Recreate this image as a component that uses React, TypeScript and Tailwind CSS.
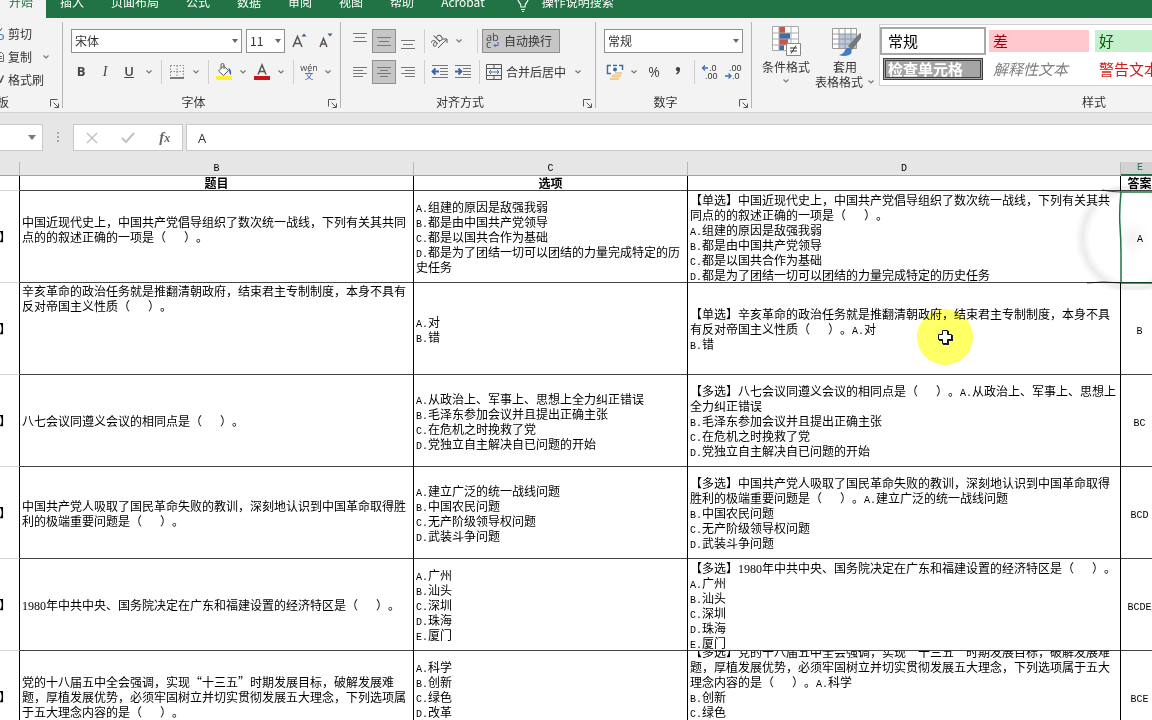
import { useState } from "react";
import type { ReactNode } from "react";

type Row = {
    kind: string;
    question: string;
    options: string;
    full: string;
    answer: string;
    top?: boolean;
};

const tabs = ["插入", "页面布局", "公式", "数据", "审阅", "视图", "帮助", "Acrobat"];

const rows: Row[] = [
    {
        kind: "【单选】",
        question: "中国近现代史上，中国共产党倡导组织了数次统一战线，下列有关其共同\n点的的叙述正确的一项是（   ）。\n",
        options: "A.组建的原因是敌强我弱\nB.都是由中国共产党领导\nC.都是以国共合作为基础\nD.都是为了团结一切可以团结的力量完成特定的历\n史任务",
        full: "【单选】中国近现代史上，中国共产党倡导组织了数次统一战线，下列有关其共\n同点的的叙述正确的一项是（   ）。\nA.组建的原因是敌强我弱\nB.都是由中国共产党领导\nC.都是以国共合作为基础\nD.都是为了团结一切可以团结的力量完成特定的历史任务",
        answer: "A",
    },
    {
        kind: "【单选】",
        question: "辛亥革命的政治任务就是推翻清朝政府，结束君主专制制度，本身不具有\n反对帝国主义性质（   ）。",
        options: "A.对\nB.错",
        full: "【单选】辛亥革命的政治任务就是推翻清朝政府，结束君主专制制度，本身不具\n有反对帝国主义性质（   ）。A.对\nB.错",
        answer: "B",
        top: true,
    },
    {
        kind: "【多选】",
        question: "八七会议同遵义会议的相同点是（   ）。",
        options: "A.从政治上、军事上、思想上全力纠正错误\nB.毛泽东参加会议并且提出正确主张\nC.在危机之时挽救了党\nD.党独立自主解决自已问题的开始",
        full: "【多选】八七会议同遵义会议的相同点是（   ）。A.从政治上、军事上、思想上\n全力纠正错误\nB.毛泽东参加会议并且提出正确主张\nC.在危机之时挽救了党\nD.党独立自主解决自已问题的开始",
        answer: "BC",
    },
    {
        kind: "【多选】",
        question: "中国共产党人吸取了国民革命失败的教训，深刻地认识到中国革命取得胜\n利的极端重要问题是（   ）。",
        options: "A.建立广泛的统一战线问题\nB.中国农民问题\nC.无产阶级领导权问题\nD.武装斗争问题",
        full: "【多选】中国共产党人吸取了国民革命失败的教训，深刻地认识到中国革命取得\n胜利的极端重要问题是（   ）。A.建立广泛的统一战线问题\nB.中国农民问题\nC.无产阶级领导权问题\nD.武装斗争问题",
        answer: "BCD",
    },
    {
        kind: "【多选】",
        question: "1980年中共中央、国务院决定在广东和福建设置的经济特区是（   ）。",
        options: "A.广州\nB.汕头\nC.深圳\nD.珠海\nE.厦门",
        full: "【多选】1980年中共中央、国务院决定在广东和福建设置的经济特区是（   ）。\nA.广州\nB.汕头\nC.深圳\nD.珠海\nE.厦门",
        answer: "BCDE",
    },
    {
        kind: "【多选】",
        question: "党的十八届五中全会强调，实现“十三五”时期发展目标，破解发展难\n题，厚植发展优势，必须牢固树立并切实贯彻发展五大理念，下列选项属\n于五大理念内容的是（   ）。",
        options: "A.科学\nB.创新\nC.绿色\nD.改革\nE.开放",
        full: "【多选】党的十八届五中全会强调，实现“十三五”时期发展目标，破解发展难\n题，厚植发展优势，必须牢固树立并切实贯彻发展五大理念，下列选项属于五大\n理念内容的是（   ）。A.科学\nB.创新\nC.绿色\nD.改革\nE.开放",
        answer: "BCE",
    },
];

// Latin runs are set half as wide as a Chinese character
function CellText({ text }: { text: string }) {
    return (
        <div className="shrink-0 text-xs whitespace-pre [text-spacing-trim:space-all]">
            {text.split("\n").map((line, n) => (
                <div key={n} className="h-[15px] leading-[15px]">
                    {line.split(/([A-Z. ]+|[0-9]+)/).map((part, i) => {
                        if (i % 2 === 0) return part;
                        return /[0-9]/.test(part) ? (
                            <span key={i} className="font-['Liberation_Serif',serif]">{part}</span>
                        ) : (
                            <span key={i} className="font-['Liberation_Mono',monospace] text-[10px] leading-none">{part}</span>
                        );
                    })}
                </div>
            ))}
        </div>
    );
}

function Chevron() {
    return (
        <svg className="h-2 w-4 shrink-0" viewBox="0 0 16 8" fill="none" stroke="#777" strokeWidth="1.2">
            <path d="M5.5 2.5 8 5l2.5-2.5" />
        </svg>
    );
}

function ToolButton({ label, wide, active, children }: { label: string; wide?: boolean; active?: boolean; children: ReactNode }) {
    return (
        <button
            aria-label={label}
            className={`flex h-6 shrink-0 items-center justify-center text-[#444] ${wide ? "w-6" : "w-[22px]"} ${active ? "border border-[#8f8f8f] bg-[#c6c6c6]" : ""}`}
        >
            {children}
        </button>
    );
}

function Sep() {
    return <div className="mx-1 h-6 w-px shrink-0 bg-[#d0d0d0]" />;
}

function Lines({ rows }: { rows: number[][] }) {
    return (
        <svg className="h-4 w-4 shrink-0" viewBox="0 0 16 16" stroke="#777" strokeWidth="1">
            {rows.map(([x1, x2, y]) => (
                <path key={y} d={`M${x1} ${y + 0.5}H${x2}`} />
            ))}
        </svg>
    );
}

function Launcher({ label }: { label: string }) {
    return (
        <button aria-label={label + "设置"} className="absolute right-[3px] bottom-0">
            <svg className="h-[9px] w-[9px]" viewBox="0 0 9 9" fill="none" stroke="#555">
                <path d="M.5 7.5v-7h7M3.5 3.5l4.5 4.5M8.5 4.5v4h-4" />
            </svg>
        </button>
    );
}

function Group({ label, className, children }: { label: string; className: string; children: ReactNode }) {
    return (
        <section className={`relative my-1 flex shrink-0 flex-col border-r border-[#b5b5b5] ${className}`}>
            <div className="flex h-[72px] shrink-0 flex-col gap-[7px] pt-[7px]">{children}</div>
            <div className="shrink-0 pr-4 text-center leading-4">{label}</div>
            <Launcher label={label} />
        </section>
    );
}

function Picker({ label, options, className }: { label: string; options: string[]; className: string }) {
    return (
        <div className={`relative ${className}`}>
            <select aria-label={label} className="h-6 w-full appearance-none border border-[#8f8f8f] bg-white pl-[3px] text-xs text-[#333]">
                {options.map((o) => (
                    <option key={o}>{o}</option>
                ))}
            </select>
            <svg className="pointer-events-none absolute top-[10px] right-1 h-1 w-[6px]" viewBox="0 0 6 4" fill="#666">
                <path d="M0 0h6L3 4z" />
            </svg>
        </div>
    );
}

function DecimalIcon({ grow }: { grow?: boolean }) {
    return (
        <svg className="h-[18px] w-[18px]" viewBox="0 0 18 18" fontFamily="Liberation Sans, sans-serif" fontSize="9" fill="#333">
            <text x={grow ? 8 : 5} y="8">{grow ? ".0" : ".00"}</text>
            <text x={grow ? 4 : 8} y="16">{grow ? ".00" : ".0"}</text>
            {grow ? (
                <path d="M1.5 5H7M4 2.5 1.5 5 4 7.5" fill="none" stroke="#3a6fb5" strokeWidth="1.3" />
            ) : (
                <path d="M1 13h6M4.500 10.500 7 13l-2.500 2.500" fill="none" stroke="#3a6fb5" strokeWidth="1.3" />
            )}
        </svg>
    );
}

function IndentIcon({ right }: { right?: boolean }) {
    return (
        <svg className="h-4 w-[18px]" viewBox="0 0 18 16" fill="none" stroke="#777">
            <path d="M1 1.5h16M9 4.5h8M9 7.5h8M9 10.5h8M1 13.5h16" />
            <path d={right ? "M1 7.5h6M4.5 4.5l3 3-3 3" : "M8 7.5H2M4.5 4.5l-3 3 3 3"} stroke="#3a62a5" strokeWidth="1.8" />
        </svg>
    );
}

function Ribbon() {
    return (
        <div className="flex h-[95px] overflow-hidden border-b border-[#d2d2d2] bg-[#f3f3f3] text-xs text-[#333]">
            <section className="relative my-1 flex w-[63px] shrink-0 flex-col border-r border-[#b5b5b5]">
                <div className="flex h-[72px] shrink-0 flex-col">
                    <button className="flex h-[23px] items-center">
                        <svg className="mr-1 h-4 w-1" viewBox="0 0 4 16" fill="none">
                            <path d="M0 5 2 2" stroke="#555" />
                            <circle cx="1" cy="11" r="2.5" stroke="#4a7fc0" strokeWidth="1.2" />
                        </svg>
                        剪切
                    </button>
                    <button className="flex h-[23px] items-center">
                        <svg className="mr-1 h-4 w-1" viewBox="0 0 4 16" fill="none" stroke="#666">
                            <path d="M0 3.5h1.5l2 2v7H0M0 7.5h2M0 9.5h2" />
                        </svg>
                        复制
                        <span className="flex pl-1.5"><Chevron /></span>
                    </button>
                    <button className="flex h-[23px] items-center">
                        <svg className="mr-1 h-4 w-1" viewBox="0 0 4 16">
                            <path d="M0 9 3 3l1 1-3 7H0z" fill="#555" />
                        </svg>
                        格式刷
                    </button>
                </div>
                <div className="flex w-[9px] shrink-0 justify-end">
                    <span className="shrink-0 leading-4 whitespace-nowrap">剪贴板</span>
                </div>
                <Launcher label="剪贴板" />
            </section>

            {/* Font */}
            <Group label="字体" className="w-[278px]">
                <div className="flex items-center gap-1 pl-2">
                    <Picker label="字体" options={["宋体", "黑体"]} className="w-[171px]" />
                    <Picker label="字号" options={["11", "12"]} className="w-[39px]" />
                    <ToolButton label="增大字号" wide>
                        <svg className="h-[18px] w-[18px]" viewBox="0 0 18 18">
                            <path d="M1 15 5.500 4.500 10 15M2.500 11.500h6" fill="none" stroke="#555" strokeWidth="1.5" />
                            <path d="m9.500 4.500 2.500-3 2.500 3z" fill="#3b5f8a" />
                        </svg>
                    </ToolButton>
                    <ToolButton label="减小字号">
                        <svg className="h-[18px] w-[18px]" viewBox="0 0 18 18">
                            <path d="M1 15 4.500 6.500 8 15M2 12h5" fill="none" stroke="#555" strokeWidth="1.5" />
                            <path d="m8.500 1.500 2.500 3 2.500-3z" fill="#3b5f8a" />
                        </svg>
                    </ToolButton>
                </div>
                <div className="flex items-center pl-1.5">
                    <ToolButton label="加粗" wide><b className="font-['Open_Sans',sans-serif] text-[13px]">B</b></ToolButton>
                    <ToolButton label="倾斜" wide><i className="font-['Liberation_Serif',serif] text-sm">I</i></ToolButton>
                    <ToolButton label="下划线" wide><span className="font-['Open_Sans',sans-serif] text-[13px] font-semibold underline">U</span></ToolButton>
                    <Chevron />
                    <Sep />
                    <ToolButton label="边框">
                        <svg className="h-[14px] w-[14px]" viewBox="0 0 14 14" fill="none" stroke="#888">
                            <path d="M.5.5h13v12M.5.5v12M7 .5v12M.5 6.5h13" strokeDasharray="1.5 1.5" />
                            <path d="M0 13h14" stroke="#555" strokeWidth="1.5" />
                        </svg>
                    </ToolButton>
                    <Chevron />
                    <Sep />
                    <ToolButton label="填充颜色">
                        <svg className="h-[18px] w-[18px]" viewBox="0 0 18 18">
                            <path d="M1 13h16v4H1z" fill="#ffee33" />
                            <path d="m3.500 8 5-5 5 4.500-5 5z" fill="#fff" stroke="#555" />
                            <path d="M6 5.500V2q0-1.500 1.500-1.500T9 2v4" fill="none" stroke="#555" />
                            <path d="M13 5q4 1 3 7-2-1-2-5z" fill="#3d67a5" />
                        </svg>
                    </ToolButton>
                    <Chevron />
                    <ToolButton label="字体颜色">
                        <svg className="h-[18px] w-[18px]" viewBox="0 0 18 18">
                            <path d="M1 13h16v4H1z" fill="#c8141c" />
                            <path d="M5 11.500 9 2l4 9.500M6.500 8.500h5" fill="none" stroke="#555" strokeWidth="1.5" />
                        </svg>
                    </ToolButton>
                    <Chevron />
                    <Sep />
                    <ToolButton label="拼音">
                        <span className="flex flex-col items-center text-[9px] leading-[8px]">
                            <span className="font-['Open_Sans',sans-serif]">wén</span>
                            <span className="text-[#2f62ad]">文</span>
                        </span>
                    </ToolButton>
                    <Chevron />
                </div>
            </Group>

            {/* Alignment */}
            <Group label="对齐方式" className="w-[255px]">
                <div className="flex items-center pl-[7px]">
                    <ToolButton label="顶端对齐" wide><Lines rows={[[1, 15, 0], [3, 13, 4], [1, 15, 8]]} /></ToolButton>
                    <ToolButton label="垂直居中" wide active><Lines rows={[[1, 15, 4], [3, 13, 8], [1, 15, 12]]} /></ToolButton>
                    <ToolButton label="底端对齐" wide><Lines rows={[[1, 15, 7], [3, 13, 11], [1, 15, 15]]} /></ToolButton>
                    <Sep />
                    <ToolButton label="方向">
                        <svg className="h-[18px] w-[18px]" viewBox="0 0 18 18" fill="#555">
                            <text x="0" y="12" fontSize="12" fontFamily="Open Sans, sans-serif" transform="rotate(-45 6 10)">ab</text>
                            <path d="m7 16 8.500-8.500M11.500 7h4.500v4" fill="none" stroke="#555" />
                        </svg>
                    </ToolButton>
                    <Chevron />
                    <div className="pl-[6px]"><Sep /></div>
                    <button className="flex h-6 w-[78px] items-center gap-1 border border-[#8f8f8f] bg-[#c6c6c6] pl-[3px] whitespace-nowrap">
                        <svg className="h-4 w-[14px]" viewBox="0 0 14 16" fill="#444" fontFamily="Open Sans, sans-serif" fontSize="11">
                            <text x="0" y="8">ab</text>
                            <text x="0" y="15">c</text>
                            <path d="M12 9v3.500H8M9.500 11 8 12.500 9.500 14" fill="none" stroke="#3a6fb5" />
                        </svg>
                        自动换行
                    </button>
                </div>
                <div className="flex items-center pl-[7px]">
                    <ToolButton label="左对齐" wide><Lines rows={[[1, 15, 3], [1, 11, 6], [1, 15, 9], [1, 11, 12]]} /></ToolButton>
                    <ToolButton label="居中" wide active><Lines rows={[[1, 15, 3], [4, 12, 6], [1, 15, 9], [4, 12, 12]]} /></ToolButton>
                    <ToolButton label="右对齐" wide><Lines rows={[[1, 15, 3], [5, 15, 6], [1, 15, 9], [5, 15, 12]]} /></ToolButton>
                    <Sep />
                    <ToolButton label="减少缩进量"><IndentIcon /></ToolButton>
                    <ToolButton label="增加缩进量" wide><IndentIcon right /></ToolButton>
                    <Sep />
                    <button className="flex h-6 items-center gap-1 pl-0.5 whitespace-nowrap">
                        <svg className="h-4 w-4" viewBox="0 0 16 16" fill="none" stroke="#555">
                            <path d="M.5.5h15v15H.5zM.5 4.500h15M.5 11.500h15M8 .5v4M8 11.500v4" />
                            <path d="M3 8h10M5 6 3 8l2 2M11 6l2 2-2 2" stroke="#3a6fb5" />
                        </svg>
                        合并后居中
                        <Chevron />
                    </button>
                </div>
            </Group>

            {/* Number */}
            <Group label="数字" className="w-[156px]">
                <div className="flex items-center px-2">
                    <Picker label="数字格式" options={["常规", "数值"]} className="w-full" />
                </div>
                <div className="flex items-center pl-2">
                    <ToolButton label="会计数字格式">
                        <svg className="h-[18px] w-[18px]" viewBox="0 0 18 18" fill="none">
                            <path d="M1.500 2.500h15v8h-15z" fill="#fff" />
                            <path d="M5 2.500H1.500v8H5M13 2.500h3.500V7M7 2.500h4" stroke="#3d6d9e" strokeWidth="1.5" />
                            <circle cx="9" cy="6.500" r="2" fill="#3d6d9e" />
                            <path d="M9 9h7v2H9zM6 11.500h9V14H6zM4 14.500h9V17H4z" fill="#f0cf94" />
                        </svg>
                    </ToolButton>
                    <Chevron />
                    <ToolButton label="百分比样式" wide><span className="font-['Open_Sans',sans-serif] text-sm">%</span></ToolButton>
                    <ToolButton label="千位分隔样式" wide>
                        <svg className="h-3 w-2" viewBox="0 0 8 12" fill="#444">
                            <path d="M4 1a2 2 0 0 1 2 2.500Q6 7 2.500 8.500L2 7.500Q3.500 6.500 3.800 5.200A2 2 0 0 1 4 1z" />
                        </svg>
                    </ToolButton>
                    <Sep />
                    <ToolButton label="增加小数位数"><DecimalIcon grow /></ToolButton>
                    <ToolButton label="减少小数位数" wide><DecimalIcon /></ToolButton>
                </div>
            </Group>

            {/* Styles */}
            <section className="my-1 flex flex-1 flex-col overflow-hidden">
                <div className="flex h-[72px] shrink-0">
                    <button className="ml-[9px] flex w-[50px] shrink-0 flex-col items-center pt-1 leading-[15px] whitespace-nowrap">
                        <svg className="mb-0.5 h-[31px] w-[30px] shrink-0" viewBox="0 0 30 31" fill="none">
                            <path d="M1.500.5h26v24h-26z" fill="#fff" />
                            <path d="M8 1h6v6H8zM8 13h9v6H8z" fill="#c9554b" />
                            <path d="M8 7h11v6H8zM8 19h5v6H8z" fill="#3f6da8" />
                            <path d="M1.500.5h26v24h-26zM1.500 7h26M1.500 13h26M1.500 19h26M8 .5v24M20 .5v24" stroke="#aaa" />
                            <path d="M15.500 17.500h14v12h-14z" fill="#fff" stroke="#888" />
                            <path d="M19 22h7M19 25h7M25 19.500l-5 8" stroke="#333" />
                        </svg>
                        条件格式
                        <span className="flex pt-[3px]"><Chevron /></span>
                    </button>
                    <button className="ml-[3px] flex w-[62px] shrink-0 flex-col items-start pt-1 pl-px leading-[15px] whitespace-nowrap">
                        <svg className="mb-0.5 ml-4 h-[31px] w-[30px] shrink-0" viewBox="0 0 30 31" fill="none">
                            <path d="M1.500 2.500h24v20h-24z" fill="#fff" />
                            <path d="M8 8h17.500v14.500H8z" fill="#b9c9e4" />
                            <path d="M1.500 2.500h24v20h-24zM1.500 8h24M1.500 13h24M1.500 18h24M8 2.500v20M14 2.500v20M20 2.500v20" stroke="#999" />
                            <path d="m17 20 11-12 2-1v5L21 24z" fill="#777" />
                            <path d="M8 29q5-1 6-5 3-4 6-1 2 4-2 6-5 2-10 0z" fill="#3f7fc1" />
                        </svg>
                        <span className="pl-[18px]">套用</span>
                        <span className="flex items-center">表格格式<Chevron /></span>
                    </button>
                    <div className="mt-0.5 ml-[3px] h-[62px] flex-1 overflow-hidden border border-r-0 border-[#d0d0d0] bg-white text-[15px]">
                        <div className="flex w-max items-center gap-[3px] pt-0.5">
                            <button className="h-7 w-[106px] border-2 border-[#a8a8a8] bg-white pl-[6px] text-left leading-[22px] text-black">常规</button>
                            <button className="h-[22px] w-[100px] bg-[#ffc7ce] pl-1 text-left leading-5 text-[#9c0006]">差</button>
                            <button className="ml-[3px] h-[22px] w-[100px] bg-[#c6efce] pl-1 text-left leading-5 text-[#006100]">好</button>
                        </div>
                        <div className="flex w-max items-center gap-[6px] pt-[3px] pl-[3px]">
                            <button className="flex h-[22px] w-[100px] items-center border-[3px] border-double border-[#3f3f3f] bg-[#a5a5a5] pl-[2px] leading-4 font-bold text-white">检查单元格</button>
                            <button className="h-[22px] w-[100px] pl-1 text-left leading-5 text-[#7f7f7f] italic">解释性文本</button>
                            <button className="h-[22px] w-[100px] pl-1 text-left leading-5 text-[#d01c1c]">警告文本</button>
                        </div>
                    </div>
                </div>
                <div className="shrink-0 pl-[330px] leading-4 whitespace-nowrap">样式</div>
            </section>
        </div>
    );
}

function FormulaBar() {
    return (
        <div className="flex gap-[3px] bg-[#e6e6e6] py-[11px]">
            <div className="relative w-[43px] shrink-0">
                <input aria-label="名称框" className="h-[27px] w-full border border-l-0 border-[#c8c8c8] bg-white pr-5 text-xs" />
                <svg className="pointer-events-none absolute top-[11px] right-[7px] h-[5px] w-2" viewBox="0 0 8 5" fill="#777">
                    <path d="M0 0h8L4 5z" />
                </svg>
            </div>
            <svg className="h-[27px] w-6 shrink-0" viewBox="0 0 24 27" fill="#a5a5a5">
                <path d="M11 8h2v2h-2zM11 12h2v2h-2zM11 16h2v2h-2z" />
            </svg>
            <div className="flex h-[27px] w-[110px] shrink-0 items-center justify-around border border-[#c8c8c8] bg-white">
                <button aria-label="取消">
                    <svg className="h-3 w-3" viewBox="0 0 12 12" stroke="#c2c2c2" strokeWidth="1.5">
                        <path d="m1 1 10 10M11 1 1 11" />
                    </svg>
                </button>
                <button aria-label="输入">
                    <svg className="h-3 w-[14px]" viewBox="0 0 14 12" fill="none" stroke="#c2c2c2" strokeWidth="2">
                        <path d="m1 6 4 4 8-9" />
                    </svg>
                </button>
                <button aria-label="插入函数" className="font-['Liberation_Serif',serif] text-[15px] leading-4 font-bold text-[#666] italic">
                    f<span className="text-xs">x</span>
                </button>
            </div>
            <input aria-label="编辑栏" defaultValue="A" className="h-[27px] min-w-0 flex-1 border border-r-0 border-[#c8c8c8] bg-white pl-[11px] font-['Open_Sans',sans-serif] text-[13px] text-[#333]" />
        </div>
    );
}

function Sheet() {
    const head = "h-[14px] border-r border-b border-r-[#b8b8b8] border-b-[#a5a5a5] p-0 font-['Liberation_Mono',monospace] text-[10px] leading-[13px] font-normal";
    const title = "h-[15px] border-r border-b border-r-black border-b-[#444] p-0 text-xs leading-[14px] font-bold";
    const cell = "border-r border-b border-r-black border-b-[#444] p-0";
    const box = "flex h-[91px] overflow-hidden pl-[2px]";

    return (
        <main className="relative min-h-0 flex-1 overflow-hidden bg-white">
            <table className="w-[calc(100%+7px)] table-fixed border-separate border-spacing-0 text-black">
                <colgroup>
                    <col className="w-5" />
                    <col className="w-[394px]" />
                    <col className="w-[274px]" />
                    <col />
                    <col className="w-[38px]" />
                </colgroup>
                <thead>
                    <tr className="bg-[#e6e6e6]">
                        <th className={head}></th>
                        <th className={head}>B</th>
                        <th className={head}>C</th>
                        <th className={head}>D</th>
                        <th className="h-[14px] border-b-2 border-[#217346] bg-[#d2d2d2] p-0 font-['Liberation_Mono',monospace] text-[10px] leading-3 font-normal text-[#217346]">E</th>
                    </tr>
                </thead>
                <tbody>
                    <tr>
                        <td className="border-r border-b border-r-black border-b-[#d4d4d4] p-0"></td>
                        <th className={title}>题目</th>
                        <th className={title}>选项</th>
                        <th className={title}></th>
                        <th className={title}>答案</th>
                    </tr>
                    {rows.map((row, i) => (
                        <tr key={i}>
                            <td className="border-r border-b border-r-black border-b-[#d4d4d4] p-0">
                                <div className="flex h-[91px] items-center justify-end overflow-hidden pr-2 font-bold">
                                    <CellText text={row.kind} />
                                </div>
                            </td>
                            <td className={cell}>
                                <div className={`${box} ${row.top ? "items-start" : "items-center"}`}><CellText text={row.question} /></div>
                            </td>
                            <td className={cell}>
                                <div className={`${box} items-center`}><CellText text={row.options} /></div>
                            </td>
                            <td className={i === 0 ? "border-r border-b border-r-transparent border-b-[#444] p-0" : cell}>
                                <div className={`${box} items-center`}><CellText text={row.full} /></div>
                            </td>
                            <td className={i === 0 ? "border-b border-[#217346] p-0" : cell}>
                                <div className="flex h-[91px] items-center justify-center"><CellText text={row.answer} /></div>
                            </td>
                        </tr>
                    ))}
                </tbody>
            </table>

            {/* Ripple over the selected cell */}
            <svg className="pointer-events-none absolute top-6 right-0 h-[104px] w-[90px] mix-blend-multiply" viewBox="0 0 90 104" fill="none">
                <defs>
                    <radialGradient id="ripple">
                        <stop offset="0" stopColor="#f3f3f3" />
                        <stop offset=".3" stopColor="#fff" />
                        <stop offset=".74" stopColor="#fff" />
                        <stop offset=".87" stopColor="#ececec" />
                        <stop offset="1" stopColor="#fff" />
                    </radialGradient>
                </defs>
                <circle cx="71" cy="52" r="58" fill="url(#ripple)" />
                <path d="M90 6H59q-2 20-1 34t1 28v29h31" stroke="#217346" strokeWidth="1.5" />
                <path d="M40 4q10 2 19 2M25 97q16-2 34 0" stroke="#444" />
            </svg>

            {/* Pointer with highlight */}
            <div className="pointer-events-none absolute top-[147px] left-[917px] h-14 w-14 rounded-full bg-[#ffff66] mix-blend-multiply" />
            <svg className="pointer-events-none absolute top-[167px] left-[937px] h-4 w-4" viewBox="0 0 16 16">
                <path d="M6 2h6v4h4v6h-4v4H6v-4H2V6h4z" fill="#222" />
                <path d="M5.500 1.500h5v4h4v5h-4v4h-5v-4h-4v-5h4z" fill="#fff" stroke="#111" />
            </svg>
        </main>
    );
}

export default function App() {
    const [active, setActive] = useState("开始");

    return (
        <div className="flex h-screen flex-col overflow-hidden bg-[#e6e6e6] font-['Noto_Sans_CJK_SC',sans-serif]">
            <header className="h-[18px] shrink-0 overflow-hidden bg-[#217346] text-xs text-white">
                <nav className="-mt-[7px] flex h-[25px] whitespace-nowrap">
                    <button className="bg-[#f3f3f3] pr-[13px] pb-[7px] pl-[9px] text-[#217346]" onClick={() => setActive("开始")}>开始</button>
                    <div className="flex gap-[27px] pb-[7px] pl-[14px]">
                        {tabs.map((tab) => (
                            <button key={tab} aria-pressed={active === tab} onClick={() => setActive(tab)}>{tab}</button>
                        ))}
                    </div>
                    <button className="flex items-center gap-3 pb-[7px] pl-[31px]">
                        <svg className="h-5 w-[14px]" viewBox="0 0 14 20" fill="none" stroke="#fff" strokeWidth="1.2">
                            <path d="M5 15Q5 12 3 10a5 5 0 1 1 8 0q-2 2-2 5zM5 17.500h4M6 19.500h2" />
                        </svg>
                        操作说明搜索
                    </button>
                </nav>
            </header>
            <Ribbon />
            <FormulaBar />
            <Sheet />
        </div>
    );
}
